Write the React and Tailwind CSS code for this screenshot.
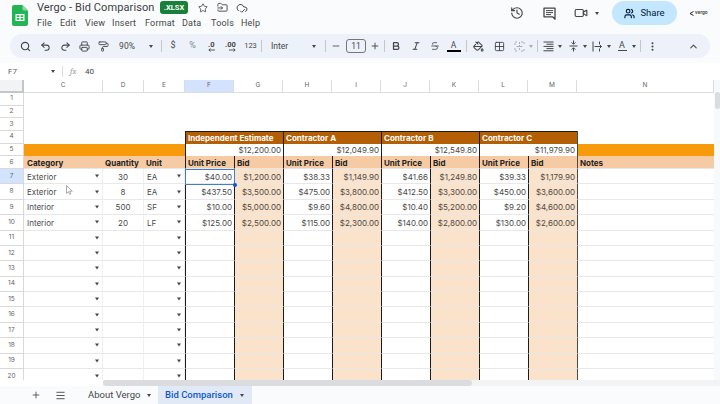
import {
  Search, Undo2, Redo2, Printer, PaintRoller, Star, FolderInput, CloudCheck, History,
  Video, Users, Plus, Minus, Bold, Italic, Strikethrough, PaintBucket, Grid2x2,
  EllipsisVertical, ChevronUp, Menu,
} from "lucide-react";

const colLetters = ["C", "D", "E", "F", "G", "H", "I", "J", "K", "L", "M", "N"];
const bidCols = ["G", "I", "K", "M"];
const blackLeft = ["F", "G", "H", "I", "J", "K", "L", "M", "N"];

const rows = [
  ["Exterior", "30", "EA", "$40.00", "$1,200.00", "$38.33", "$1,149.90", "$41.66", "$1,249.80", "$39.33", "$1,179.90"],
  ["Exterior", "8", "EA", "$437.50", "$3,500.00", "$475.00", "$3,800.00", "$412.50", "$3,300.00", "$450.00", "$3,600.00"],
  ["Interior", "500", "SF", "$10.00", "$5,000.00", "$9.60", "$4,800.00", "$10.40", "$5,200.00", "$9.20", "$4,600.00"],
  ["Interior", "20", "LF", "$125.00", "$2,500.00", "$115.00", "$2,300.00", "$140.00", "$2,800.00", "$130.00", "$2,600.00"],
];

function Caret({ className = "" }) {
  return <span className={`inline-block w-0 h-0 border-x-[2.5px] border-x-transparent border-t-[3px] border-t-[#444746] ${className}`} />;
}

function Sep({ className = "" }) {
  return <span className={`w-px h-[12px] bg-[#c7c7c7] shrink-0 ${className}`} />;
}

function Tool({ w, children }) {
  return <span className={`flex items-center justify-center shrink-0 ${w}`}>{children}</span>;
}

function SheetsLogo() {
  return (
    <svg width="16" height="21" viewBox="0 0 16 21">
      <path d="M2 0h8.5L16 5.5V19a2 2 0 0 1-2 2H2a2 2 0 0 1-2-2V2a2 2 0 0 1 2-2z" fill="#22b455" />
      <path d="M10.5 0L16 5.5h-4a1.5 1.5 0 0 1-1.5-1.5z" fill="#8ed8a6" />
      <path d="M3.5 9h9v7h-9zM4.7 10.2v1.7h2.7v-1.7zm3.9 0v1.7h2.7v-1.7zM4.7 13.1v1.7h2.7v-1.7zm3.9 0v1.7h2.7v-1.7z" fill="#fff" fillRule="evenodd" />
    </svg>
  );
}

function CommentIcon() {
  return (
    <svg className="ml-[19px]" width="13" height="13" viewBox="0 0 13 13" fill="none" stroke="#444746" strokeWidth="1.3">
      <path d="M1 1.2h11v11l-2.4-2.4H1z" strokeLinejoin="round" />
      <path d="M3 3.6h7M3 5.6h7M3 7.6h5" strokeWidth="1" />
    </svg>
  );
}

function MergeIcon() {
  return (
    <svg width="11" height="11" viewBox="0 0 11 11" fill="none" stroke="#a8adb3" strokeWidth="1">
      <path d="M1 4V1h3M7 1h3v3M1 7v3h3M7 10h3V7M5.5 1v9" strokeDasharray="2 1" />
      <path d="M2.5 5.5h6" />
    </svg>
  );
}

function HAlignIcon() {
  return (
    <svg width="11" height="11" viewBox="0 0 11 11" stroke="#444746" strokeWidth="1">
      <path d="M0.5 1h10M3.5 3.2h7M0.5 5.4h10M3.5 7.6h7M0.5 9.8h10" />
    </svg>
  );
}

function VAlignIcon() {
  return (
    <svg width="9" height="12" viewBox="0 0 9 12" fill="none" stroke="#444746" strokeWidth="1">
      <path d="M0.5 6h8M4.5 0.5v3.5M4.5 8v3.5" />
      <path d="M2.6 2.4l1.9 1.9 1.9-1.9M2.6 9.6l1.9-1.9 1.9 1.9" />
    </svg>
  );
}

function WrapIcon() {
  return (
    <svg width="11" height="11" viewBox="0 0 11 11" fill="none" stroke="#444746" strokeWidth="1">
      <path d="M1 0.5v10M7.5 0.5v2.5M7.5 8v2.5" />
      <path d="M2.5 5.5h7M7.5 3.5l2 2-2 2" />
    </svg>
  );
}

function DecimalArrow({ right }) {
  return (
    <svg width="7" height="4" viewBox="0 0 7 4" fill="none" stroke="#444746" strokeWidth="0.9">
      <path d={right ? "M0 2h6M4.5 0.5L6.2 2 4.5 3.5" : "M7 2H1M2.5 0.5L0.8 2l1.7 1.5"} />
    </svg>
  );
}

function TitleBar() {
  return (
    <div className="flex items-start h-[34px] shrink-0">
      <div className="ml-[12px] mt-[5px] mr-[9px]"><SheetsLogo /></div>
      <div className="flex flex-col">
        <div className="flex items-center h-[15px]">
          <span className="text-[11px] leading-[15px] text-[#3c4043] w-[123px] whitespace-nowrap tracking-[0.1px]">Vergo - Bid Comparison</span>
          <span className="w-[28px] h-[13px] rounded-[3px] bg-[#188038] text-white text-[7.5px] font-bold flex items-center justify-center">.XLSX</span>
          <Star className="size-[10px] ml-[10px] text-[#444746]" strokeWidth={2} />
          <FolderInput className="size-[11px] ml-[9px] text-[#444746]" strokeWidth={2} />
          <CloudCheck className="size-[12px] ml-[8px] text-[#444746]" strokeWidth={2} />
        </div>
        <div className="flex items-center mt-[1px] text-[9px] leading-[14px] text-[#444746] tracking-[0.2px]">
          <span className="w-[23px]">File</span>
          <span className="w-[25px]">Edit</span>
          <span className="w-[27px]">View</span>
          <span className="w-[33px]">Insert</span>
          <span className="w-[37px]">Format</span>
          <span className="w-[29px]">Data</span>
          <span className="w-[30px]">Tools</span>
          <span>Help</span>
        </div>
      </div>
      <div className="flex items-center ml-auto h-[26px] text-[#444746]">
        <History className="size-[14px]" strokeWidth={2} />
        <CommentIcon />
        <Video className="size-[14px] ml-[18px]" strokeWidth={2} />
        <Caret className="ml-[7px]" />
        <div className="ml-[13px] w-[65px] h-[24px] rounded-full bg-[#c2e7ff] flex items-center justify-center gap-[5px] text-[9.5px] text-[#001d35]">
          <Users className="size-[11px]" strokeWidth={2.5} />
          Share
        </div>
        <div className="ml-[12px] mr-[11px] w-[20px] flex items-center gap-[1px] text-[5px] font-bold text-[#555]">
          <svg width="5" height="5" viewBox="0 0 5 5"><path d="M4.5 0.5L1 2.5l3.5 2" fill="none" stroke="#222" strokeWidth="1" /></svg>
          vergo
        </div>
      </div>
    </div>
  );
}

function Toolbar() {
  const ic = "size-[11px] text-[#444746]";
  return (
    <div className="mx-[10px] h-[24px] shrink-0 rounded-full bg-[#edf2fa] flex items-center pl-[6px] text-[#444746] text-[8px]">
      <Tool w="w-[19px]"><Search className={ic} strokeWidth={2.5} /></Tool>
      <Tool w="w-[21px]"><Undo2 className={ic} strokeWidth={2.2} /></Tool>
      <Tool w="w-[19px]"><Redo2 className={ic} strokeWidth={2.2} /></Tool>
      <Tool w="w-[19px]"><Printer className={ic} strokeWidth={2} /></Tool>
      <Tool w="w-[19px]"><PaintRoller className={ic} strokeWidth={2} /></Tool>
      <Tool w="w-[28px]"><span className="text-[8.5px]">90%</span></Tool>
      <Tool w="w-[20px]"><Caret /></Tool>
      <Sep />
      <Tool w="w-[22px]"><span className="text-[9px]">$</span></Tool>
      <Tool w="w-[17px]"><span className="text-[9px] text-[#80868b]">%</span></Tool>
      <Tool w="w-[20px]">
        <span className="flex flex-col items-end font-bold leading-[7px] text-[7.5px]">.0<DecimalArrow /></span>
      </Tool>
      <Tool w="w-[19px]">
        <span className="flex flex-col items-end font-bold leading-[7px] text-[7.5px]">.00<DecimalArrow right /></span>
      </Tool>
      <Tool w="w-[21px]"><span className="text-[7.5px]">123</span></Tool>
      <Sep />
      <span className="w-[63px] pl-[9px] pr-[9px] flex items-center justify-between shrink-0 text-[8.5px]">Inter<Caret /></span>
      <Sep />
      <Tool w="w-[20px]"><Minus className="size-[10px]" strokeWidth={2} /></Tool>
      <span className="w-[20px] h-[14px] shrink-0 rounded-[3px] border border-[#747775] flex items-center justify-center text-[8.5px]">11</span>
      <Tool w="w-[18px]"><Plus className="size-[10px]" strokeWidth={2.2} /></Tool>
      <Sep />
      <Tool w="w-[21px]"><Bold className="size-[10px]" strokeWidth={3} /></Tool>
      <Tool w="w-[19px]"><Italic className="size-[10px]" strokeWidth={2.5} /></Tool>
      <Tool w="w-[19px]"><Strikethrough className="size-[10px]" strokeWidth={2} /></Tool>
      <Tool w="w-[19px]">
        <span className="flex flex-col items-center w-[14px] text-[8.5px] leading-[10px]">A<span className="w-full h-[2px] bg-black" /></span>
      </Tool>
      <Sep className="ml-[3px]" />
      <Tool w="w-[22px]"><PaintBucket className={ic} strokeWidth={2.2} /></Tool>
      <Tool w="w-[21px]"><Grid2x2 className={ic} strokeWidth={2} /></Tool>
      <Tool w="w-[18px]"><MergeIcon /></Tool>
      <Tool w="w-[6px]"><Caret className="opacity-40" /></Tool>
      <Sep className="ml-[3px]" />
      <Tool w="w-[20px]"><HAlignIcon /></Tool>
      <Tool w="w-[3px]"><Caret /></Tool>
      <Tool w="w-[20px] ml-[2px]"><VAlignIcon /></Tool>
      <Tool w="w-[3px]"><Caret /></Tool>
      <Tool w="w-[20px] ml-[1px]"><WrapIcon /></Tool>
      <Tool w="w-[3px]"><Caret /></Tool>
      <Tool w="w-[20px] ml-[2px]">
        <span className="flex flex-col items-center text-[9px] leading-[9px]">A<span className="w-[9px] h-px bg-[#444746]" /></span>
      </Tool>
      <Tool w="w-[3px]"><Caret /></Tool>
      <Sep className="ml-[5px]" />
      <Tool w="w-[22px]"><EllipsisVertical className={ic} strokeWidth={2.5} /></Tool>
      <Tool w="w-[47px] pl-[14px]"><ChevronUp className={ic} strokeWidth={2.2} /></Tool>
    </div>
  );
}

function FormulaBar() {
  return (
    <div className="flex items-center h-[17px] mt-[5px] shrink-0 bg-white text-[8px] text-[#5f6368]">
      <span className="w-[51px] pl-[8px]">F7</span>
      <Caret />
      <span className="w-px h-[11px] bg-[#dadce0] ml-[7px]" />
      <span className="ml-[7px] w-[14px] italic font-serif text-[#a0a4a8] text-[9px]">fx</span>
      <span className="ml-[1px] text-[#444746]">40</span>
    </div>
  );
}

function Body({ col, value }) {
  const bid = bidCols.includes(col);
  const line = col === "N" ? "border-l border-l-[#4a4a4a] " : blackLeft.includes(col) ? "border-l border-l-[#1c1c1c] " : "border-r border-r-[#f0f0f0] ";
  const bg = bid ? "bg-[#fae2cb] " : "bg-white ";
  const showCaret = col === "C" || col === "E";
  const align = col === "D" ? "justify-center " : showCaret ? "pl-[3px] " : "justify-end pr-[2px] ";
  return (
    <div className={"relative overflow-hidden flex items-center pt-[1px] text-[8px] leading-none whitespace-nowrap text-[#4a4a4a] border-b border-b-[#e8e8e8] " + line + bg + align}>
      {value}
      {showCaret && <Caret className="absolute right-[3px] top-1/2 -translate-y-1/2 border-t-[#666]" />}
    </div>
  );
}

function Sheet() {
  const estimates = ["$12,200.00", "$12,049.90", "$12,549.80", "$11,979.90"];
  const heads = ["Independent Estimate", "Contractor A", "Contractor B", "Contractor C"];
  const rowHead = (n, active) => (
    <div key={`rh${n}`} className={`flex items-center justify-center pt-[1px] text-[6.5px] text-[#5f6368] border-r border-b border-[#d9d9d9] ${active ? "bg-[#d3e3fd]" : "bg-white"}`}>
      {n}
    </div>
  );
  const hdrCell = "flex items-center pt-[1px] text-[8px] font-bold text-[#222] bg-[#f6caa2] border-b border-[#e6e6e6] leading-none whitespace-nowrap";
  return (
    <div className="relative h-[300px] shrink-0 overflow-hidden bg-white">
      <div className="grid grid-cols-[24px_79px_41px_41px_repeat(8,49px)_137px_6px] grid-rows-[13px_repeat(6,12.67px)_repeat(14,15.4px)]">
        <div className="bg-[#f1f3f4] border-r-[2px] border-b-[2px] border-[#c4c7c5]" />
        {colLetters.map((c) => (
          <div key={c} className={`flex items-center justify-center text-[6.5px] text-[#5f6368] border-r border-b border-[#dadce0] ${c === "F" ? "bg-[#d3e3fd]" : "bg-white"}`}>
            {c}
          </div>
        ))}
        <div className="bg-[#f8f9fa] row-span-21 row-start-1 col-start-14 relative">
          <div className="absolute left-[1px] top-[12px] w-[5px] h-[17px] rounded-full bg-[#dadce0]" />
        </div>

        {[1, 2, 3].flatMap((n) => [rowHead(n), <div key={`e${n}`} className="col-span-12 bg-white" />])}

        {rowHead(4)}
        <div className="col-span-3 bg-white" />
        {heads.map((h) => (
          <div key={h} className="col-span-2 flex items-center pl-[2px] pt-[1px] bg-[#b45f06] text-white text-[8px] font-bold border-l border-l-[#1c1c1c] border-t border-t-[#1c1c1c] whitespace-nowrap leading-none">
            {h}
          </div>
        ))}
        <div className="bg-white border-l border-l-[#4a4a4a]" />

        {rowHead(5)}
        <div className="col-span-3 bg-[#f79b0a]" />
        {estimates.map((v) => (
          <div key={v} className="col-span-2 flex items-center justify-end pr-[2px] pt-[1px] bg-white text-[8px] text-[#4a4a4a] border-l border-l-[#1c1c1c] leading-none">
            {v}
          </div>
        ))}
        <div className="bg-[#f79b0a] border-l border-l-[#4a4a4a]" />

        {rowHead(6)}
        <div className={hdrCell + " pl-[3px]"}>Category</div>
        <div className={hdrCell + " pl-[2px]"}>Quantity</div>
        <div className={hdrCell + " pl-[2px]"}>Unit</div>
        {["F", "G", "H", "I", "J", "K", "L", "M"].map((c) => (
          <div key={c} className={hdrCell + " pl-[2px] border-l border-l-[#1c1c1c]"}>
            {bidCols.includes(c) ? "Bid" : "Unit Price"}
          </div>
        ))}
        <div className={hdrCell + " pl-[2px] border-l border-l-[#4a4a4a]"}>Notes</div>

        {Array.from({ length: 14 }, (_, i) => i + 7).flatMap((n) => {
          const data = rows[n - 7] || [];
          return [
            rowHead(n, n === 7),
            ...colLetters.map((c, j) => <Body key={`${n}${c}`} col={c} value={data[j]} />),
          ];
        })}
      </div>

      {/* selected cell F7 */}
      <div className="absolute left-[185px] top-[89px] w-[50px] h-[16px] border-[1.5px] border-[#3f7fc9] pointer-events-none" />
      <div className="absolute left-[233px] top-[102.5px] size-[4px] rounded-full bg-[#0b57d0] pointer-events-none" />

      {/* mouse pointer */}
      <svg className="absolute left-[66px] top-[105px]" width="7" height="10" viewBox="0 0 7 10">
        <path d="M0.5 0.5v8l2-1.8 1.2 2.6 1.2-.5-1.2-2.6h2.6z" fill="#fff" stroke="#888" strokeWidth="0.7" />
      </svg>
    </div>
  );
}

function SheetTabs() {
  return (
    <>
      <div className="h-[6px] shrink-0 bg-[#f1f3f4] flex">
        <div className="w-[103px] bg-white" />
        <div className="w-[369px] bg-[#dadce0] rounded-full" />
      </div>
      <div className="flex-1 flex items-stretch bg-[#f9fbfd] text-[9.5px] text-[#444746]">
        <Tool w="w-[10px] ml-[31px]"><Plus className="size-[10px] shrink-0" strokeWidth={2} /></Tool>
        <Tool w="w-[11px] ml-[14px]"><Menu className="size-[11px] shrink-0" strokeWidth={2} /></Tool>
        <span className="flex items-center ml-[22px] w-[70px] whitespace-nowrap">
          About Vergo
          <Caret className="ml-[7px] shrink-0" />
        </span>
        <span className="flex items-center w-[94px] pl-[7px] bg-[#e1e9f7] text-[#0b57d0] font-medium whitespace-nowrap">
          Bid Comparison
          <Caret className="ml-[7px] border-t-[#0b57d0]" />
        </span>
      </div>
    </>
  );
}

export default function App() {
  return (
    <div className="w-[720px] h-[404px] overflow-hidden flex flex-col bg-[#f9fbfd] font-['Roboto',_'Liberation_Sans',_sans-serif]">
      <TitleBar />
      <Toolbar />
      <FormulaBar />
      <div className="font-['Inter',_'Liberation_Sans',_sans-serif]"><Sheet /></div>
      <SheetTabs />
    </div>
  );
}
